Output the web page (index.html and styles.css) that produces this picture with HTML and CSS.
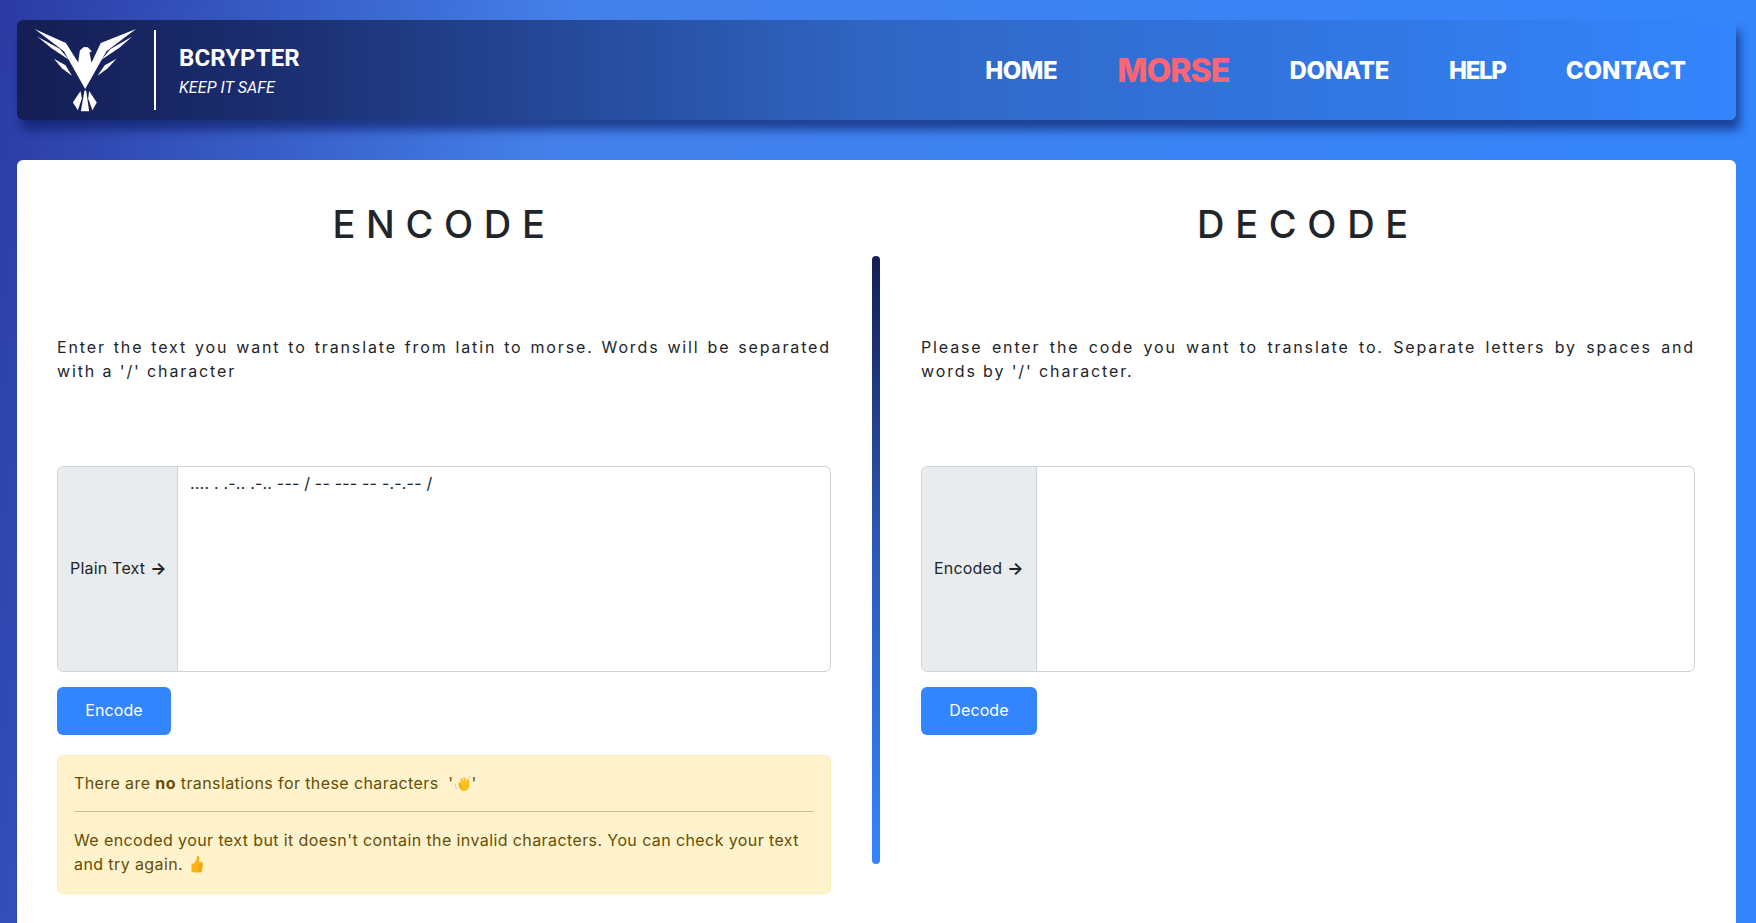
FILE: index.html
```
<!DOCTYPE html>
<html lang="en">
<head>
<meta charset="utf-8">
<title>BCrypter - Morse</title>
<link rel="stylesheet" href="styles.css">
</head>
<body>
<header class="navbar">
  <div class="brand">
    <svg class="logo" viewBox="100 80 310 260" aria-hidden="true">
      <path fill="#fff" d="M102 85 L196 127 L233 186 L238 150 L250 139 L262 140 L274 152 L267 156 L273 187 L301 127 L407 85 L318 152 L254 266 L190 152 Z"/>
      <path fill="#fff" d="M110 108 L178 145 L205 178 L152 142 Z"/>
      <path fill="#fff" d="M396 108 L330 145 L303 178 L356 142 Z"/>
      <path fill="#fff" d="M160 175 L195 194 L214 226 L184 203 Z"/>
      <path fill="#fff" d="M348 175 L313 194 L291 226 L322 203 Z"/>
      <path fill="#fff" d="M217 306 L240 272 L244 294 L232 330 Z"/>
      <path fill="#fff" d="M252 270 L257 270 L266 333 L241 333 Z"/>
      <path fill="#fff" d="M266 272 L289 306 L276 330 L263 294 Z"/>
    </svg>
    <span class="brand-rule"></span>
    <div class="brand-text">
      <div class="brand-name">BCRYPTER</div>
      <div class="brand-tag">KEEP IT SAFE</div>
    </div>
  </div>
  <nav class="menu">
    <a class="menu-link">HOME</a>
    <a class="menu-link menu-active">MORSE</a>
    <a class="menu-link menu-donate">DONATE</a>
    <a class="menu-link menu-help">HELP</a>
    <a class="menu-link menu-contact">CONTACT</a>
  </nav>
</header>
<main class="panel">
  <section class="col">
    <h1 class="col-title">ENCODE</h1>
    <p class="col-desc">Enter the text you want to translate from latin to morse. Words will be separated with a '/' character</p>
    <div class="group">
      <span class="group-label group-label-plain">Plain Text <span class="arrow">→</span></span>
      <div class="group-input">.... . .-.. .-.. --- / -- --- -- -.-.-- /</div>
    </div>
    <button class="btn btn-encode">Encode</button>
    <div class="alert">
      <p class="alert-line">There are <b>no</b> translations for these characters&nbsp; '<svg class="emoji" viewBox="0 0 36 36" aria-hidden="true"><path fill="#a9c4df" d="M3 20c-1 3 0 7 2 10l1-1c-2-3-2-6-2-9zM30 3c2 1 4 3 4 6l-1 0c0-2-2-4-4-5z"/><path fill="#fcc21b" d="M9 17l3 -2 5 4 -5-9 3-2 6 8-3-9 3-1 5 10 1-7 3 0 1 12c0 8-5 13-11 13-5 0-8-3-10-7z"/><path fill="#e79a12" d="M10 19l8 9 -1 2-8-9z"/></svg>'</p>
      <hr class="alert-rule">
      <p class="alert-line">We encoded your text but it doesn't contain the invalid characters. You can check your text and try again.&nbsp;<svg class="emoji" viewBox="0 0 36 36" aria-hidden="true"><path fill="#fcb316" d="M7 17h5l5-8 1-7c3-1 5 1 5 5l-1 7h5c2 0 3 2 3 3l-2 15c0 2-2 3-4 3H14c-3 0-4-1-7-1z"/><path fill="#e58f0c" d="M20 19h9v2h-9zM20 24h8v2h-8zM20 29h7v2h-7z"/></svg></p>
    </div>
  </section>
  <div class="divider"></div>
  <section class="col">
    <h1 class="col-title">DECODE</h1>
    <p class="col-desc">Please enter the code you want to translate to. Separate letters by spaces and words by '/' character.</p>
    <div class="group">
      <span class="group-label group-label-enc">Encoded <span class="arrow">→</span></span>
      <div class="group-input"></div>
    </div>
    <button class="btn btn-decode">Decode</button>
  </section>
</main>
</body>
</html>
```
FILE: styles.css
```
* { box-sizing: border-box; }
html, body { margin: 0; height: 923px; overflow: hidden; }
body {
  display: flex;
  flex-direction: column;
  padding: 20px 20px 0 17px;
  background: linear-gradient(100deg, #2b3aa3 0%, #4480ea 30%, #3a83f4 62%, #3385fd 100%);
  font-family: Inter, "Open Sans", sans-serif;
  color: #212529;
}
.navbar {
  height: 100px;
  flex: none;
  display: flex;
  align-items: center;
  justify-content: space-between;
  padding: 0 50px 0 16px;
  border-radius: 6px;
  background: linear-gradient(90deg, #141e54 0%, #1a2b6c 13%, #3066c4 50%, #3385fd 100%);
  box-shadow: 4px 10px 10px rgba(10, 25, 90, .6);
}
.brand { display: flex; align-items: center; }
.logo { width: 103px; height: 87px; display: block; margin-left: 1px; }
.brand-rule { width: 2px; height: 80px; background: #fff; margin: 0 23px 0 17px; }
.brand-text { color: #fff; font-family: "Roboto", sans-serif; padding-top: 2px; }
.brand-name { font-size: 24px; font-weight: 700; line-height: 30px; letter-spacing: .1px; }
.brand-tag { font-size: 16px; font-style: italic; line-height: 22px; margin-top: 4px; letter-spacing: .1px; }
.menu { display: flex; align-items: center; gap: 60px; }
.menu-link { color: #fff; font-weight: 800; font-size: 24px; letter-spacing: -.5px; }
.menu-active { color: #ff6473; font-size: 32px; letter-spacing: -.9px; }
.menu-donate { letter-spacing: -.3px; }
.menu-help { letter-spacing: -1.3px; }
.menu-contact { letter-spacing: 0; }
.panel {
  flex: 1;
  margin-top: 40px;
  background: #fff;
  border-radius: 6px 6px 0 0;
  display: grid;
  grid-template-columns: 855px 8px 1fr;
}
.col { min-width: 0; padding: 0 41px; }
.col:first-child { padding-left: 40px; }
.col-title {
  margin: 40px 0 0;
  text-align: center;
  font-size: 38px;
  line-height: 48px;
  font-weight: 500;
  letter-spacing: 10.7px;
}
.col-desc {
  margin: 87px 0 0;
  height: 131px;
  font-size: 16px;
  line-height: 24px;
  letter-spacing: 1.87px;
  font-weight: 400;
  text-align: justify;
}
.divider {
  margin-top: 96px;
  height: 608px;
  border-radius: 4px;
  background: linear-gradient(180deg, #141e54 0%, #2b56b4 45%, #3385fd 100%);
}
.group {
  display: flex;
  height: 206px;
  border: 1px solid #ced4da;
  border-radius: 6px;
  overflow: hidden;
}
.group-label {
  flex: none;
  display: flex;
  align-items: center;
  gap: 5px;
  padding: 0 12px 2px;
  background: #e9ecef;
  border-right: 1px solid #ced4da;
  font-size: 16px;
  letter-spacing: .2px;
  white-space: nowrap;
}
.group-label-plain { width: 120px; }
.group-label-enc { width: 115px; }
.arrow { font-weight: 700; font-size: 17px; }
.group-input { flex: 1; padding: 4px 12px; font-size: 16px; line-height: 24px; letter-spacing: .2px; }
.btn {
  display: block;
  margin-top: 15px;
  height: 48px;
  padding-bottom: 3px;
  border: 0;
  border-radius: 6px;
  background: #3385ff;
  color: #fff;
  font: 400 16px Inter, sans-serif;
  letter-spacing: .1px;
}
.btn-encode { width: 114px; }
.btn-decode { width: 116px; }
.alert {
  margin-top: 20px;
  height: 139px;
  padding: 15px 16px;
  background: #fff3cd;
  border: 1px solid #ffecb5;
  border-radius: 6px;
  color: #664d03;
  font-size: 16px;
  line-height: 24px;
  letter-spacing: .4px;
}
.alert-line { margin: 0; }
.alert-rule { margin: 16px 0; border: 0; border-top: 1px solid #d0c191; }
.emoji { width: 18px; height: 18px; vertical-align: -3px; }
```
